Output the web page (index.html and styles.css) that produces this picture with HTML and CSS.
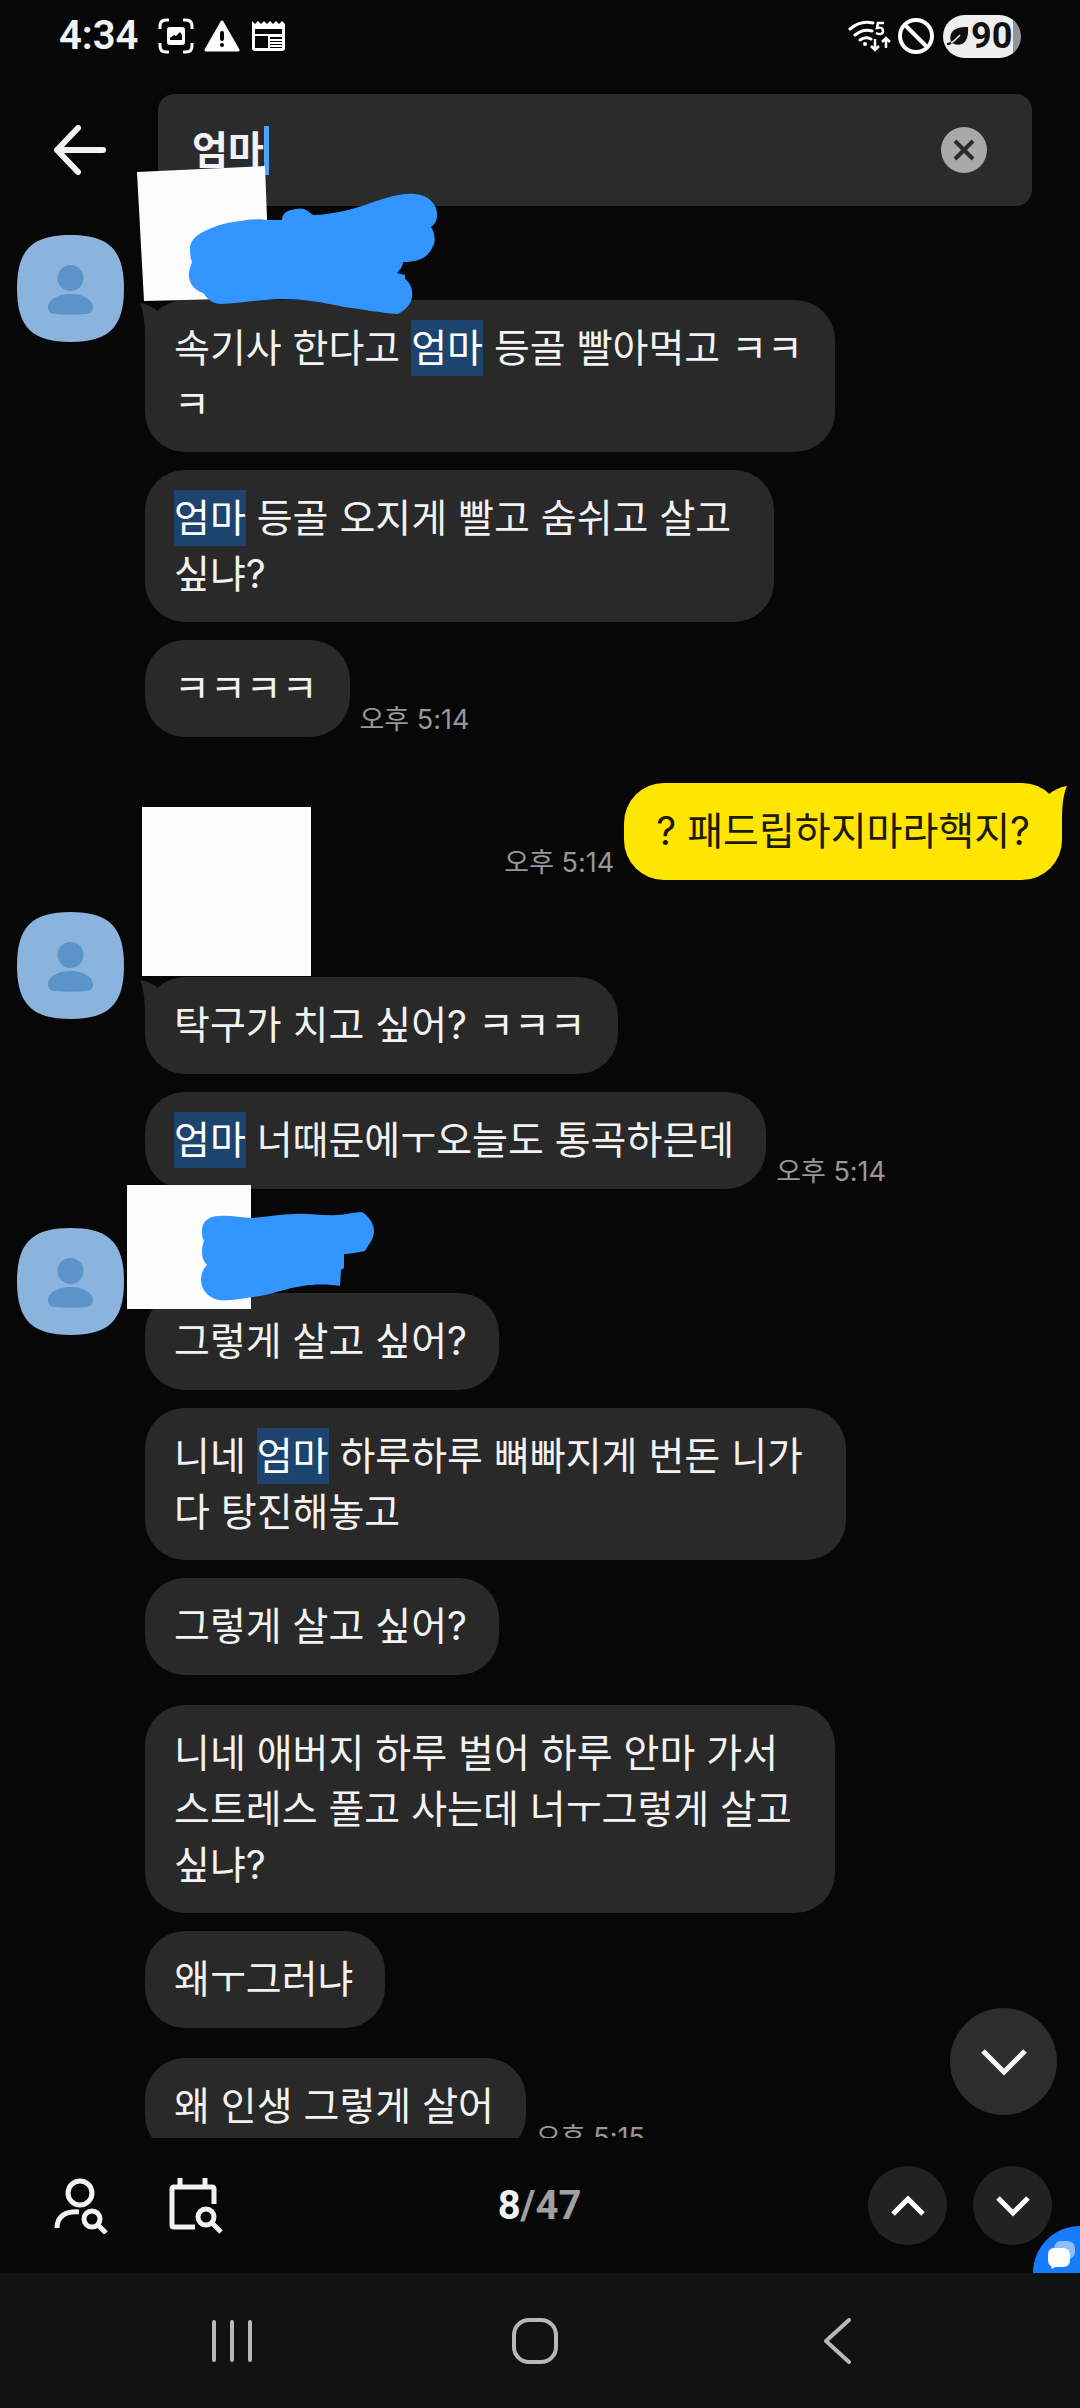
FILE: index.html
```html
<!DOCTYPE html>
<html lang="ko">
<head>
<meta charset="utf-8">
<meta name="viewport" content="width=device-width, initial-scale=1">
<title>대화 검색</title>
<link rel="stylesheet" href="styles.css">
</head>
<body>
<svg class="symbols" aria-hidden="true">
  <symbol id="avatar" viewBox="0 0 107 107">
    <path d="M53.500 0C92 0 107 15 107 53.500S92 107 53.500 107 0 92 0 53.500 15 0 53.500 0Z" fill="#8ab4de"/>
    <circle cx="53.500" cy="43" r="13" fill="#5b94c8"/>
    <path d="M31 72c0-7 10-13 22.500-13S76 65 76 72c0 5-3 7-7 7-10 1-21 1-31 0-4 0-7-2-7-7Z" fill="#5b94c8"/>
  </symbol>
  <symbol id="tail" viewBox="0 0 20 42">
    <path d="M0 2C7 3 13 6 18 10V40H5C5 22 4 11 0 2Z" fill="currentColor"/>
  </symbol>
</svg>
<div class="screen">
  <header class="top">
    <div class="status">
      <span class="clock">4:34</span>
      <svg class="st-capture" viewBox="0 0 36 36" width="36" height="36"><path d="M2 11V8q0-6 6-6h3M25 2h3q6 0 6 6v3M34 25v3q0 6-6 6h-3M11 34H8q-6 0-6-6v-3" fill="none" stroke="#fff" stroke-width="3"/><rect x="9" y="9" width="18" height="18" rx="3" fill="#fff"/><path d="M12 22v-2l4-3 2 1 4-4 2 3v5Z" fill="#070707"/></svg>
      <svg class="st-warn" viewBox="0 0 36 34" width="36" height="34"><path d="M18 3 34 31H2Z" fill="#fff" stroke="#fff" stroke-width="3" stroke-linejoin="round"/><path d="M18 14v6" stroke="#070707" stroke-width="4" stroke-linecap="round"/><circle cx="18" cy="26" r="2" fill="#070707"/></svg>
      <svg class="st-news" viewBox="0 0 33 30" width="33" height="30"><path d="M0 0l3 3 3-3 3 3 3-3 3 3 3-3 3 3 3-3 3 3 3-3 3 3V27q0 3-3 3H3q-3 0-3-3Z" fill="#fff"/><path d="M3 8h27v5H3ZM3 15h13v12H3ZM18 16h12v2H18ZM18 20h12v1H18ZM18 23h12v1H18ZM18 26h12v1H18Z" fill="#070707"/></svg>
      <svg class="st-wifi" viewBox="0 0 44 32" width="44" height="32"><g fill="none" stroke="#fff" stroke-width="3" stroke-linecap="round"><path d="M2 9C9 3 17 1 25 3M7 15c5-4 11-6 17-4M12 20c4-3 7-3 11-1"/></g><circle cx="17" cy="24" r="2" fill="#fff"/><path d="M36 3h-6l-1 5c4-1 6 0 6 3s-3 4-7 2M27 19v11M23 26l4 4 4-4M38 28V18M34 22l4-4 4 4" fill="none" stroke="#fff" stroke-width="2.500"/></svg>
      <svg class="st-block" viewBox="0 0 36 36" width="36" height="36"><circle cx="18" cy="18" r="16" fill="none" stroke="#fff" stroke-width="4"/><path d="M7 7l22 22" stroke="#fff" stroke-width="4"/></svg>
      <span class="battery"><svg viewBox="0 0 22 20" width="22" height="20"><path d="M4 16C1 6 8 0 21 1c1 14-5 20-14 17Z" fill="#111"/><path d="M0 18C6 18 9 13 13 9" fill="none" stroke="#111" stroke-width="2"/><path d="M4 17C8 15 10 12 13 9" fill="none" stroke="#eee" stroke-width="1.500"/></svg>90</span>
    </div>
    <form class="search">
      <button class="plain" type="button" aria-label="뒤로"><svg viewBox="0 0 52 50" width="52" height="50"><path d="M24 3 3 25l21 22M3 25h46" fill="none" stroke="#f2f2f2" stroke-width="6" stroke-linecap="round" stroke-linejoin="round"/></svg></button>
      <div class="field">
        <input type="text" value="엄마" aria-label="대화 내용 검색">
        <span class="caret"></span>
        <button class="plain clear" type="button" aria-label="지우기"><svg viewBox="0 0 46 46" width="46" height="46"><circle cx="23" cy="23" r="23" fill="#a9a9a9"/><path d="M14 14l18 18M32 14 14 32" stroke="#2b2b2b" stroke-width="4"/></svg></button>
      </div>
    </form>
  </header>

  <main class="chat">
    <section class="group">
      <svg class="avatar"><use href="#avatar"/></svg>
      <div class="messages">
        <p class="bubble first"><svg class="tail"><use href="#tail"/></svg>속기사 한다고 <mark>엄마</mark> 등골 빨아먹고 ㅋㅋ<br>ㅋ</p>
        <p class="bubble"><mark>엄마</mark> 등골 오지게 빨고 숨쉬고 살고 <br>싶냐?</p>
        <div class="line"><p class="bubble">ㅋㅋㅋㅋ</p><time>오후 5:14</time></div>
      </div>
      <svg class="cover cover-a" viewBox="120 160 330 160"><path d="M137 172 265 166 270 298 144 301Z" fill="#fcfcfc"/><path d="M190 247C191 239 198 234 207 230C217 225 229 222 241 221C250 219 260 219 267 220H282C282 213 288 210 296 209C304 207 308 211 313 215C323 215 333 213 344 211C358 208 372 202 386 198C396 195 407 193 415 194C430 195 438 206 437 216C437 221 434 225 431 227C435 233 436 242 433 246C428 258 419 262 403 262C403 266 400 270 397 273L405 275V279C411 283 413 291 412 297C411 305 405 310 398 314C380 313 361 309 344 307C323 302 302 299 282 299C261 299 240 304 220 304C211 303 207 298 203 293C193 290 188 281 189 273C189 269 191 266 192 262C190 257 190 252 190 247Z" fill="#3395ff"/></svg>
    </section>

    <section class="mine line"><p class="bubble"><svg class="tail"><use href="#tail"/></svg>? 패드립하지마라핵지?</p><time>오후 5:14</time></section>

    <section class="group">
      <svg class="avatar"><use href="#avatar"/></svg>
      <div class="messages">
        <p class="bubble first"><svg class="tail"><use href="#tail"/></svg>탁구가 치고 싶어? ㅋㅋㅋ</p>
        <div class="line"><p class="bubble"><mark>엄마</mark> 너때문에ㅜ오늘도 통곡하믄데</p><time>오후 5:14</time></div>
      </div>
      <svg class="cover cover-b" viewBox="142 807 169 169"><path d="M142 807h169v169H142Z" fill="#fcfcfc"/></svg>
    </section>

    <section class="group">
      <svg class="avatar"><use href="#avatar"/></svg>
      <div class="messages">
        <p class="bubble">그렇게 살고 싶어?</p>
        <p class="bubble">니네 <mark>엄마</mark> 하루하루 뼈빠지게 번돈 니가 <br>다 탕진해놓고</p>
        <p class="bubble">그렇게 살고 싶어?</p>
        <p class="bubble spaced">니네 애버지 하루 벌어 하루 안마 가서 <br>스트레스 풀고 사는데 너ㅜ그렇게 살고 <br>싶냐?</p>
        <p class="bubble">왜ㅜ그러냐</p>
        <div class="line spaced"><p class="bubble">왜 인생 그렇게 살어</p><time>오후 5:15</time></div>
      </div>
      <svg class="cover cover-c" viewBox="120 1180 270 140"><path d="M127 1185h124v124H127Z" fill="#fcfcfc"/><path d="M202 1230C202 1222 209 1216 219 1216C230 1215 241 1218 252 1218C266 1217 281 1214 295 1214C309 1213 323 1216 337 1215C346 1215 353 1212 362 1212C369 1216 374 1224 374 1231C374 1239 369 1244 365 1251C358 1252 350 1254 344 1254V1268L341 1270 340 1286C328 1284 315 1284 303 1286C285 1288 269 1296 252 1297C241 1299 229 1301 219 1300C208 1298 201 1289 201 1280C201 1274 203 1269 207 1265C203 1261 202 1256 202 1251C202 1247 203 1244 204 1241C202 1238 202 1234 202 1230Z" fill="#3395ff"/></svg>
    </section>
    <button class="round jump" type="button" aria-label="맨 아래로"><svg viewBox="0 0 46 28" width="46" height="28"><path d="M2 3 23 24 44 3" fill="none" stroke="#f4f4f4" stroke-width="5"/></svg></button>
  </main>

  <footer class="tools">
    <button class="plain" type="button" aria-label="보낸 사람으로 검색"><svg viewBox="0 0 54 56" width="54" height="56"><g fill="none" stroke="#f2f2f2" stroke-width="5"><circle cx="26" cy="15" r="12"/><path d="M3 50C3 38 12 33 25 34"/><circle cx="38" cy="41" r="8"/><path d="M44 47l8 8"/></g></svg></button>
    <button class="plain" type="button" aria-label="날짜로 검색"><svg viewBox="0 0 54 56" width="54" height="56"><g fill="none" stroke="#f2f2f2" stroke-width="5"><path d="M45 26V11q0-2-2-2H5q-2 0-2 2V47q0 2 2 2H26M11 0v9M36 0v9"/><circle cx="37" cy="39" r="8"/><path d="M43 45l9 9"/></g></svg></button>
    <p class="count">8<span>/47</span></p>
    <button class="round" type="button" aria-label="이전 결과"><svg viewBox="0 0 34 22" width="34" height="22"><path d="M2 19 17 4 32 19" fill="none" stroke="#fff" stroke-width="5"/></svg></button>
    <button class="round" type="button" aria-label="다음 결과"><svg viewBox="0 0 34 22" width="34" height="22"><path d="M2 3 17 18 32 3" fill="none" stroke="#fff" stroke-width="5"/></svg></button>
    <svg class="bubble-badge" viewBox="0 0 47 47"><path d="M0 47A47 47 0 0 1 47 0V47Z" fill="#177bff"/><rect x="21" y="15" width="21" height="18" rx="7" fill="#8bbdff"/><path d="M21 22h9q7 0 7 7v5q0 7-7 7h-8l-3 2-1-3q-3-2-3-6v-5q0-7 6-7Z" fill="#fff"/></svg>
  </footer>

  <nav class="system">
    <button class="plain" type="button" aria-label="최근 앱"><svg viewBox="0 0 42 44" width="42" height="44"><path d="M3 3v38M21 3v38M39 3v38" stroke="#b8b8b8" stroke-width="4" stroke-linecap="round"/></svg></button>
    <button class="plain" type="button" aria-label="홈"><svg viewBox="0 0 46 46" width="46" height="46"><rect x="2" y="2" width="42" height="42" rx="15" fill="none" stroke="#b8b8b8" stroke-width="4"/></svg></button>
    <button class="plain" type="button" aria-label="뒤로 가기"><svg viewBox="0 0 30 46" width="30" height="46"><path d="M26 2 3 23l23 21" fill="none" stroke="#b8b8b8" stroke-width="4" stroke-linecap="round" stroke-linejoin="round"/></svg></button>
  </nav>
</div>
</body>
</html>
```
FILE: styles.css
```css
* {
  box-sizing: border-box;
}

body {
  margin: 0;
  background: #070707;
  color: #f2f2f2;
  font-family: Inter, "Noto Sans CJK KR", sans-serif;
}

p {
  margin: 0;
}

svg {
  display: block;
  flex: none;
}

.symbols {
  position: absolute;
  width: 0;
  height: 0;
}

.plain {
  display: grid;
  place-items: center;
  padding: 0;
  border: 0;
  background: none;
}

.screen {
  display: flex;
  flex-direction: column;
  height: 100vh;
}

/* Status bar */
.status {
  display: flex;
  align-items: center;
  height: 72px;
  padding: 0 59px;
}

.clock {
  margin-right: 20px;
  font-family: Roboto, sans-serif;
  font-size: 40px;
  font-weight: 600;
  line-height: 48px;
}

.st-warn {
  margin: 0 12px 0 10px;
}

.st-wifi {
  margin-left: auto;
}

.st-block {
  margin: 0 9px 0 6px;
}

.battery {
  display: flex;
  align-items: center;
  gap: 2px;
  width: 78px;
  height: 43px;
  padding-left: 4px;
  border-radius: 22px;
  background: linear-gradient(90deg, #eeeeee 70px, #949494 70px);
  color: #111111;
  font-family: Roboto, sans-serif;
  font-size: 36px;
  font-weight: 700;
}

/* Search field */
.search {
  display: flex;
  align-items: center;
  gap: 52px;
  margin: 0;
  padding: 22px 48px 29px 54px;
}

.field {
  display: flex;
  flex: 1;
  align-items: center;
  height: 112px;
  padding: 0 45px 0 34px;
  border-radius: 16px;
  background: #2b2b2b;
}

.field input {
  width: 72px;
  height: 56px;
  padding: 0;
  border: 0;
  outline: 0;
  background: none;
  color: #f2f2f2;
  font: 700 39px/56px Inter, "Noto Sans CJK KR", sans-serif;
}

.caret {
  width: 5px;
  height: 49px;
  background: #4aa5fa;
}

.clear {
  margin-left: auto;
}

/* Conversation */
.chat {
  position: relative;
  flex: 1;
  min-height: 0;
  clip-path: inset(-80px 0 0 0);
}

.group {
  position: relative;
  display: flex;
  gap: 21px;
  padding-left: 17px;
}

.avatar {
  width: 107px;
  height: 107px;
}

.messages {
  display: flex;
  flex-direction: column;
  align-items: flex-start;
  gap: 18px;
  padding-top: 65px;
}

.bubble {
  position: relative;
  min-height: 97px;
  padding: 20px 32px 20px 29px;
  border-radius: 40px;
  background: #292929;
  font-size: 39px;
  line-height: 56px;
  white-space: pre;
}

.spaced {
  margin-top: 12px;
}

.tail {
  position: absolute;
  top: 1px;
  left: -5px;
  width: 20px;
  height: 42px;
  color: #292929;
}

mark {
  display: inline-block;
  background: #1c446e;
  color: #ffffff;
}

.line {
  display: flex;
  align-items: flex-end;
  gap: 10px;
}

time {
  color: #979797;
  font-size: 27px;
  line-height: 34px;
}

.mine {
  flex-direction: row-reverse;
  padding: 46px 18px 32px 0;
}

.mine .bubble {
  padding: 20px 32px;
  background: #ffe600;
  color: #1d1a00;
}

.mine .tail {
  right: -5px;
  left: auto;
  color: #ffe600;
  transform: scaleX(-1);
}

.group + .group {
  margin-top: 39px;
}

/* Marker strokes and patches laid over the sender names */
.cover {
  position: absolute;
}

.cover-a {
  top: -75px;
  left: 120px;
  width: 330px;
  height: 160px;
}

.cover-b {
  top: -105px;
  left: 142px;
  width: 169px;
  height: 169px;
}

.cover-c {
  top: -48px;
  left: 120px;
  width: 270px;
  height: 140px;
}

.round {
  display: grid;
  place-items: center;
  width: 79px;
  height: 79px;
  padding: 0;
  border: 0;
  border-radius: 50%;
  background: #222222;
}

.jump {
  position: absolute;
  right: 23px;
  bottom: 23px;
  width: 107px;
  height: 107px;
  background: #2d2d2d;
}

/* Result navigation */
.tools {
  position: relative;
  display: flex;
  align-items: center;
  gap: 26px;
  height: 135px;
  padding: 0 28px 0 54px;
}

.tools .plain + .plain {
  margin-left: 35px;
}

.count {
  flex: 1;
  padding-right: 12px;
  text-align: center;
  font-family: Roboto, sans-serif;
  font-size: 40px;
  font-weight: 700;
  line-height: 48px;
}

.count span {
  color: #a0a0a0;
}

.bubble-badge {
  position: absolute;
  right: 0;
  bottom: 0;
  width: 47px;
  height: 47px;
}

/* System navigation */
.system {
  display: grid;
  grid-template-columns: repeat(3, 1fr);
  height: 135px;
  padding: 0 90px 0 80px;
  background: #121212;
}
```
